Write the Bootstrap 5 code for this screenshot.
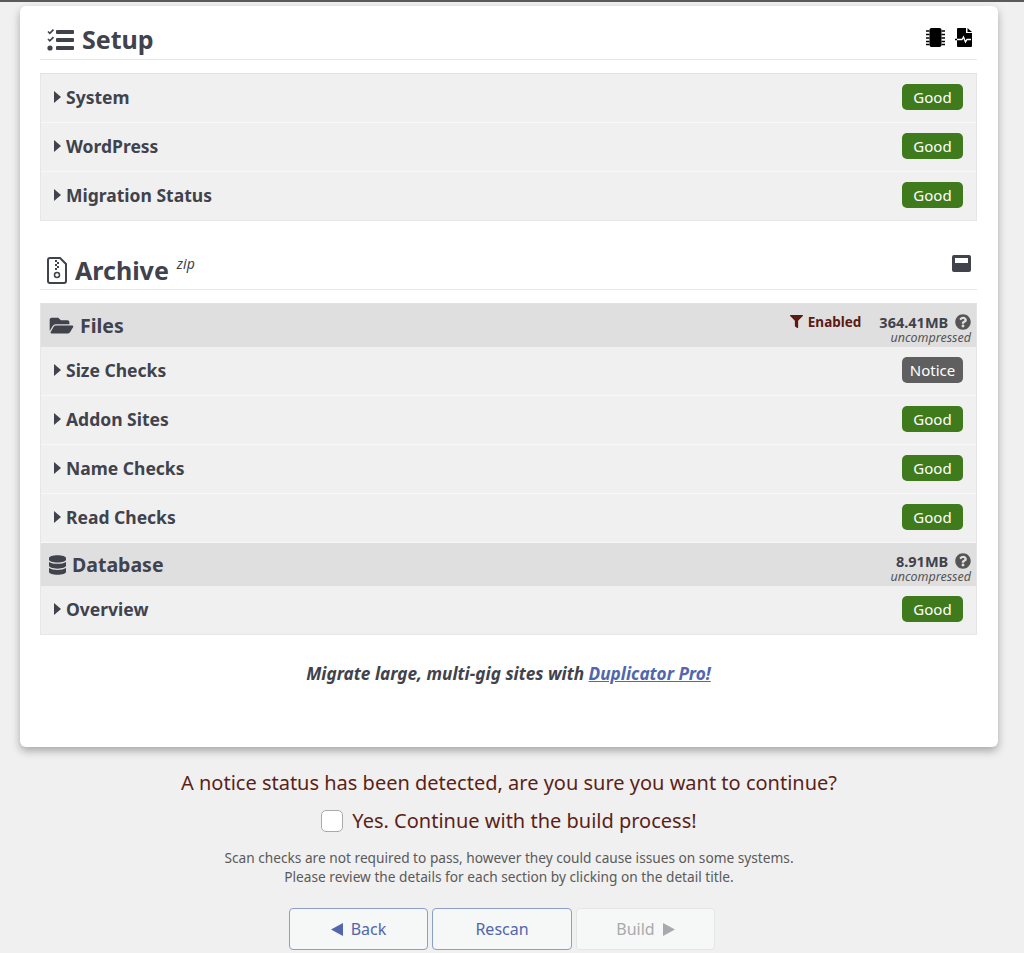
<!DOCTYPE html>
<html lang="en">
<head>
    <meta charset="UTF-8">
    <meta name="viewport" content="width=device-width, initial-scale=1.0">
    <title>Duplicator - Scan</title>
    <link rel="stylesheet" href="https://cdn.jsdelivr.net/npm/bootstrap@5.3.0/dist/css/bootstrap.min.css">
    <style>
        html, body { height: 953px; overflow: hidden; }
        body {
            background-color: #f0f0f0;
            border-top: 2px solid #5a5a5a;
            padding: 4px 26px 0 20px;
            font-family: "Noto Sans", "Open Sans", sans-serif;
            color: #40424c;
        }
        .scan-panel {
            height: 741px;
            background: #fff;
            border-radius: 6px;
            box-shadow: 0 4px 8px rgba(0,0,0,.3);
            padding: 0 21px 0 20px;
        }
        .sec-title {
            height: 54px;
            padding-top: 14px;
            border-bottom: 1px solid #e6e6e6;
            margin-bottom: 13px;
        }
        .sec-title h2 { font-size: 25px; font-weight: 700; margin: 0 0 0 7px; line-height: 1; }
        .sec-title sup { font-size: 14px; font-weight: 400; font-style: italic; position: relative; top: -6px; margin-left: 8px; }
        .archive-title { height: 69px; margin-bottom: 13px; padding-top: 30px; }
        .win-icon { margin: 0 6px 13px 0; }
        .setup-icons { margin: 0 5px 4px 0; gap: 10px; }
        .check-box { border: 1px solid #e6e6e6; border-top-color: #e2e2e2; background: #f0f0f0; }
        .check-row { height: 49px; padding: 0 13px 2px; border-bottom: 1px solid #f8f8f8; }
        .check-row:last-child { border-bottom: 0; height: 48px; }
        .check-name { font-size: 17.5px; font-weight: 700; }
        .check-name svg { margin-right: 5px; vertical-align: 1px; }
        .status-pill {
            width: 61px; height: 26px; border-radius: 5px;
            font-size: 15px; line-height: 26px; text-align: center; color: #fff;
        }
        .pill-good { background: #3f7b1c; }
        .pill-notice { background: #5f5f5f; }
        .group-head { height: 43px; background: #dfdfdf; padding: 0 5px 0 8px; }
        .group-name { font-size: 19.5px; font-weight: 700; }
        .group-name svg { margin-right: 6px; }
        .size-block { font-size: 14.5px; line-height: 17px; text-align: right; padding-top: 10px; }
        .size-val { font-weight: 700; display: block; height: 17px; }
        .size-val svg { margin-left: 3px; vertical-align: -2px; }
        .size-note { font-size: 12.5px; font-style: italic; color: #555; display: block; line-height: 12px; margin-top: 1px; }
        .filter-on { font-size: 13.5px; font-weight: 700; color: #5c1a12; margin-right: 18px; line-height: 17px; padding-top: 10px; }
        .filter-on svg { margin-right: 1px; vertical-align: -1px; }
        .pro-line { font-size: 17.2px; font-weight: 700; font-style: italic; text-align: center; margin-top: 26px; }
        .pro-line a { color: #5166ad; }
        .notice-line { color: #5c1f18; font-size: 20px; line-height: 28px; text-align: center; }
        .notice-top { margin-top: 22px; }
        .confirm-line { margin-top: 10px; gap: 9px; }
        .confirm-line .form-check-input { width: 22px; height: 22px; margin: 0; border-radius: 5px; background-color: #fff; border-color: #aaa; }
        .fine-print { font-size: 13.7px; line-height: 19px; color: #5a5a5a; text-align: center; margin-top: 13px; }
        .action-row { margin-top: 22px; gap: 4px; padding-right: 14px; }
        .act-btn {
            width: 139.5px; height: 42px; font-size: 16px; padding: 0; border-radius: 4px;
            color: #5166ad; background: #f6f7f7; border: 1px solid #8c9ccb;
        }
        .act-btn svg { vertical-align: -1px; }
        .act-btn:disabled { color: #a7aaad; background: #f6f7f7; border-color: #e4e5e6; opacity: 1; }
    </style>
</head>
<body>
    <div class="scan-panel">
        <div class="sec-title d-flex justify-content-between align-items-center">
            <h2 class="d-flex align-items-center">
                <svg class="me-2" width="27" height="22" viewBox="0 0 27 22" fill="#40424c">
                    <rect x="9" y="1" width="18" height="4" rx="1"/><rect x="9" y="9" width="18" height="4" rx="1"/><rect x="9" y="17" width="18" height="4" rx="1"/>
                    <path d="M1 2.500l1.800 1.800L6.500.6M1 10l1.800 1.800L6.500 8.100" fill="none" stroke="#40424c" stroke-width="1.600"/>
                    <circle cx="3" cy="19" r="2.600"/>
                </svg>Setup
            </h2>
            <div class="setup-icons d-flex align-items-center">
                <svg width="19" height="19" viewBox="0 0 19 19"><rect x="3.500" y="0" width="12" height="19" rx="2"/><path d="M0 3h3.500M0 6.500h3.500M0 10h3.500M0 13.500h3.500M0 16.500h3.500M15.500 3h3.500M15.500 6.500h3.500M15.500 10h3.500M15.500 13.500h3.500M15.500 16.500h3.500" stroke="#000" stroke-width="1.300"/></svg>
                <svg width="17" height="19" viewBox="0 0 17 19"><path d="M3 0h8v5h6v13a1 1 0 0 1-1 1H3a1 1 0 0 1-1-1V1a1 1 0 0 1 1-1z"/><path d="M12.500 0L17 4h-4.500z"/><path d="M0 11.500h2" stroke="#000" stroke-width="1.300"/><path d="M2 11.500h5l1.500-2.500 2 5 1.500-2.500h4" fill="none" stroke="#fff" stroke-width="1.300"/></svg>
            </div>
        </div>

        <div class="check-box">
            <div class="check-row d-flex justify-content-between align-items-center">
                <span class="check-name"><svg width="7" height="12" viewBox="0 0 7 12"><path d="M0 0l7 6-7 6z" fill="#40424c"/></svg>System</span>
                <span class="status-pill pill-good">Good</span>
            </div>
            <div class="check-row d-flex justify-content-between align-items-center">
                <span class="check-name"><svg width="7" height="12" viewBox="0 0 7 12"><path d="M0 0l7 6-7 6z" fill="#40424c"/></svg>WordPress</span>
                <span class="status-pill pill-good">Good</span>
            </div>
            <div class="check-row d-flex justify-content-between align-items-center">
                <span class="check-name"><svg width="7" height="12" viewBox="0 0 7 12"><path d="M0 0l7 6-7 6z" fill="#40424c"/></svg>Migration Status</span>
                <span class="status-pill pill-good">Good</span>
            </div>
        </div>

        <div class="sec-title archive-title d-flex justify-content-between align-items-center">
            <h2 class="d-flex align-items-center">
                <svg class="me-2" width="20" height="27" viewBox="0 0 20 27"><path d="M3 1h10l6 6v17a2 2 0 0 1-2 2H3a2 2 0 0 1-2-2V3a2 2 0 0 1 2-2z" fill="#fff" stroke="#40424c" stroke-width="2"/><path d="M8 3h2v2H8zM10 5h2v2h-2zM8 7h2v2H8zM10 9h2v2h-2zM8 11h2v2H8z" fill="#40424c"/><circle cx="10" cy="18" r="2.500" fill="none" stroke="#40424c" stroke-width="1.500"/></svg>Archive<sup>zip</sup>
            </h2>
            <svg class="win-icon" width="19" height="17" viewBox="0 0 19 17"><path d="M2 0h15a2 2 0 0 1 2 2v13a2 2 0 0 1-2 2H2a2 2 0 0 1-2-2V2a2 2 0 0 1 2-2zm1 3v5h13V3z" fill="#40424c" fill-rule="evenodd"/></svg>
        </div>

        <div class="check-box">
            <div class="group-head d-flex justify-content-between">
                <span class="group-name d-flex align-items-center"><svg width="25" height="21" viewBox="0 0 576 512"><path fill="#40424c" d="M572.694 292.093L500.27 416.248A63.997 63.997 0 0 1 444.989 448H45.025c-18.523 0-30.064-20.093-20.731-36.093l72.424-124.155A64 64 0 0 1 152 256h399.964c18.523 0 30.064 20.093 20.73 36.093zM152 224h328v-48c0-26.51-21.49-48-48-48H272l-64-64H48C21.49 64 0 85.49 0 112v278.046l69.077-118.418C86.214 242.25 117.989 224 152 224z"/></svg>Files</span>
                <div class="d-flex">
                    <span class="filter-on"><svg width="13" height="13" viewBox="0 0 512 512"><path fill="#5c1a12" d="M487.976 0H24.028C2.71 0-8.047 25.866 7.058 40.971L192 225.941V432c0 7.831 3.821 15.17 10.237 19.662l80 55.98C298.02 518.69 320 507.493 320 487.98V225.941l184.947-184.97C520.021 25.896 509.338 0 487.976 0z"/></svg> Enabled</span>
                    <div class="size-block"><span class="size-val">364.41MB <svg width="16" height="16" viewBox="0 0 512 512"><path fill="#555" d="M504 256c0 136.997-111.043 248-248 248S8 392.997 8 256C8 119.083 119.043 8 256 8s248 111.083 248 248zM262.655 90c-54.497 0-89.255 22.957-116.549 63.758-3.536 5.286-2.353 12.415 2.715 16.258l34.699 26.31c5.205 3.947 12.621 3.008 16.665-2.122 17.864-22.658 30.113-35.797 57.303-35.797 20.429 0 45.698 13.148 45.698 32.958 0 14.976-12.363 22.667-32.534 33.976C247.128 238.528 216 254.941 216 296v4c0 6.627 5.373 12 12 12h56c6.627 0 12-5.373 12-12v-1.333c0-28.462 83.186-29.647 83.186-106.667 0-58.002-60.165-102-116.531-102zM256 338c-25.365 0-46 20.635-46 46 0 25.364 20.635 46 46 46s46-20.636 46-46c0-25.365-20.635-46-46-46z"/></svg></span><span class="size-note">uncompressed</span></div>
                </div>
            </div>
            <div class="check-row d-flex justify-content-between align-items-center">
                <span class="check-name"><svg width="7" height="12" viewBox="0 0 7 12"><path d="M0 0l7 6-7 6z" fill="#40424c"/></svg>Size Checks</span>
                <span class="status-pill pill-notice">Notice</span>
            </div>
            <div class="check-row d-flex justify-content-between align-items-center">
                <span class="check-name"><svg width="7" height="12" viewBox="0 0 7 12"><path d="M0 0l7 6-7 6z" fill="#40424c"/></svg>Addon Sites</span>
                <span class="status-pill pill-good">Good</span>
            </div>
            <div class="check-row d-flex justify-content-between align-items-center">
                <span class="check-name"><svg width="7" height="12" viewBox="0 0 7 12"><path d="M0 0l7 6-7 6z" fill="#40424c"/></svg>Name Checks</span>
                <span class="status-pill pill-good">Good</span>
            </div>
            <div class="check-row d-flex justify-content-between align-items-center">
                <span class="check-name"><svg width="7" height="12" viewBox="0 0 7 12"><path d="M0 0l7 6-7 6z" fill="#40424c"/></svg>Read Checks</span>
                <span class="status-pill pill-good">Good</span>
            </div>
            <div class="group-head d-flex justify-content-between">
                <span class="group-name d-flex align-items-center"><svg width="17" height="20" viewBox="0 0 448 512"><path fill="#40424c" d="M448 73.143v45.714C448 159.143 347.667 192 224 192S0 159.143 0 118.857V73.143C0 32.857 100.333 0 224 0s224 32.857 224 73.143zM448 176v102.857C448 319.143 347.667 352 224 352S0 319.143 0 278.857V176c48.125 33.143 136.208 48.572 224 48.572S399.874 209.143 448 176zm0 160v102.857C448 479.143 347.667 512 224 512S0 479.143 0 438.857V336c48.125 33.143 136.208 48.572 224 48.572S399.874 369.143 448 336z"/></svg>Database</span>
                <div class="size-block"><span class="size-val">8.91MB <svg width="16" height="16" viewBox="0 0 512 512"><path fill="#555" d="M504 256c0 136.997-111.043 248-248 248S8 392.997 8 256C8 119.083 119.043 8 256 8s248 111.083 248 248zM262.655 90c-54.497 0-89.255 22.957-116.549 63.758-3.536 5.286-2.353 12.415 2.715 16.258l34.699 26.31c5.205 3.947 12.621 3.008 16.665-2.122 17.864-22.658 30.113-35.797 57.303-35.797 20.429 0 45.698 13.148 45.698 32.958 0 14.976-12.363 22.667-32.534 33.976C247.128 238.528 216 254.941 216 296v4c0 6.627 5.373 12 12 12h56c6.627 0 12-5.373 12-12v-1.333c0-28.462 83.186-29.647 83.186-106.667 0-58.002-60.165-102-116.531-102zM256 338c-25.365 0-46 20.635-46 46 0 25.364 20.635 46 46 46s46-20.636 46-46c0-25.365-20.635-46-46-46z"/></svg></span><span class="size-note">uncompressed</span></div>
            </div>
            <div class="check-row d-flex justify-content-between align-items-center">
                <span class="check-name"><svg width="7" height="12" viewBox="0 0 7 12"><path d="M0 0l7 6-7 6z" fill="#40424c"/></svg>Overview</span>
                <span class="status-pill pill-good">Good</span>
            </div>
        </div>

        <div class="pro-line">Migrate large, multi-gig sites with <a href="#">Duplicator Pro!</a></div>
    </div>

    <div class="notice-line notice-top">A notice status has been detected, are you sure you want to continue?</div>
    <div class="notice-line confirm-line d-flex justify-content-center align-items-center">
        <input class="form-check-input" type="checkbox" id="confirmBuild">
        <label for="confirmBuild">Yes. Continue with the build process!</label>
    </div>
    <div class="fine-print">Scan checks are not required to pass, however they could cause issues on some systems.<br>Please review the details for each section by clicking on the detail title.</div>
    <div class="action-row d-flex justify-content-center">
        <button class="btn act-btn" type="button"><svg class="me-2" width="12" height="13" viewBox="0 0 12 13"><path d="M12 0v13L0 6.500z" fill="#5166ad"/></svg>Back</button>
        <button class="btn act-btn" type="button">Rescan</button>
        <button class="btn act-btn" type="button" disabled>Build<svg class="ms-2" width="12" height="13" viewBox="0 0 12 13"><path d="M0 0v13l12-6.500z" fill="#a7aaad"/></svg></button>
    </div>
    <script src="https://cdn.jsdelivr.net/npm/bootstrap@5.3.0/dist/js/bootstrap.bundle.min.js"></script>
</body>
</html>
